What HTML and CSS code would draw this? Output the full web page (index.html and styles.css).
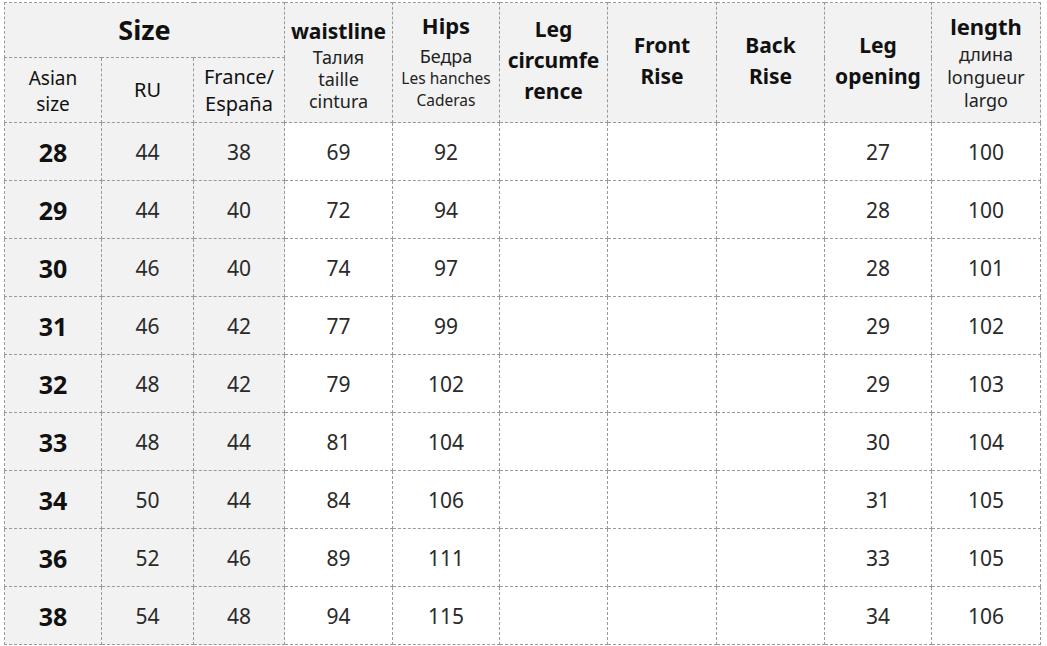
FILE: index.html
```html
<!DOCTYPE html>
<html>
<head>
<meta charset="utf-8">
<link rel="stylesheet" href="styles.css">
</head>
<body>
<table class="chart">
  <colgroup>
    <col class="c97"><col class="c92"><col class="c91"><col class="c108"><col class="c107"><col class="c108"><col class="c109"><col class="c108"><col class="c107"><col class="c109">
  </colgroup>
  <thead>
    <tr class="h1">
      <th colspan="3" class="size">Size</th>
      <th rowspan="2" class="multi waist"><div class="t">waistline</div><div class="s">Талия</div><div class="s">taille</div><div class="s">cintura</div></th>
      <th rowspan="2" class="multi hips"><div class="t">Hips</div><div class="s">Бедра</div><div class="s sm">Les hanches</div><div class="s sm">Caderas</div></th>
      <th rowspan="2" class="bold">Leg<br>circumfe<br>rence</th>
      <th rowspan="2" class="bold">Front<br>Rise</th>
      <th rowspan="2" class="bold">Back<br>Rise</th>
      <th rowspan="2" class="bold">Leg<br>opening</th>
      <th rowspan="2" class="multi len"><div class="t">length</div><div class="s">длина</div><div class="s">longueur</div><div class="s">largo</div></th>
    </tr>
    <tr class="h2">
      <th class="sub asian"><div>Asian</div><div>size</div></th>
      <th class="sub">RU</th>
      <th class="sub fr"><div>France/</div><div>España</div></th>
    </tr>
  </thead>
  <tbody>
    <tr><td class="g b">28</td><td class="g">44</td><td class="g">38</td><td>69</td><td>92</td><td></td><td></td><td></td><td>27</td><td>100</td></tr>
    <tr><td class="g b">29</td><td class="g">44</td><td class="g">40</td><td>72</td><td>94</td><td></td><td></td><td></td><td>28</td><td>100</td></tr>
    <tr><td class="g b">30</td><td class="g">46</td><td class="g">40</td><td>74</td><td>97</td><td></td><td></td><td></td><td>28</td><td>101</td></tr>
    <tr><td class="g b">31</td><td class="g">46</td><td class="g">42</td><td>77</td><td>99</td><td></td><td></td><td></td><td>29</td><td>102</td></tr>
    <tr><td class="g b">32</td><td class="g">48</td><td class="g">42</td><td>79</td><td>102</td><td></td><td></td><td></td><td>29</td><td>103</td></tr>
    <tr><td class="g b">33</td><td class="g">48</td><td class="g">44</td><td>81</td><td>104</td><td></td><td></td><td></td><td>30</td><td>104</td></tr>
    <tr><td class="g b">34</td><td class="g">50</td><td class="g">44</td><td>84</td><td>106</td><td></td><td></td><td></td><td>31</td><td>105</td></tr>
    <tr><td class="g b">36</td><td class="g">52</td><td class="g">46</td><td>89</td><td>111</td><td></td><td></td><td></td><td>33</td><td>105</td></tr>
    <tr><td class="g b">38</td><td class="g">54</td><td class="g">48</td><td>94</td><td>115</td><td></td><td></td><td></td><td>34</td><td>106</td></tr>
  </tbody>
</table>
</body>
</html>
```
FILE: styles.css
```css
html, body {
  margin: 0;
  padding: 0;
  background: #ffffff;
}
body {
  padding: 2px 0 0 4px;
  font-family: "Noto Sans", "Open Sans", sans-serif;
  color: #222;
}
.chart {
  border-collapse: collapse;
  table-layout: fixed;
  width: 1037px;
}
.c97 { width: 97px; }
.c92 { width: 92px; }
.c91 { width: 91px; }
.c108 { width: 108px; }
.c107 { width: 107px; }
.c109 { width: 109px; }
.chart th, .chart td {
  border: 1px dashed #9a9a9a;
  padding: 0;
  text-align: center;
  vertical-align: middle;
}
.chart th {
  background: #f2f2f2;
  color: #111;
}
.h1 { height: 55px; }
.h2 { height: 65px; }
.size {
  font-size: 27px;
  font-weight: 700;
  line-height: 30px;
  padding-bottom: 2px;
}
.sub {
  font-weight: 400;
  font-size: 20px;
  line-height: 22px;
  color: #222;
}
.chart th.asian {
  font-size: 19px;
  line-height: 26px;
  padding-top: 2px;
}
.fr { line-height: 27px; font-size: 20px; }
.bold {
  font-size: 21px;
  font-weight: 700;
  line-height: 31px;
}
.chart th.bold { padding-bottom: 4px; }
.chart th.multi { vertical-align: top; }
.multi .t {
  font-size: 21px;
  font-weight: 700;
  line-height: 26px;
}
.multi .s {
  font-size: 18px;
  font-weight: 400;
  line-height: 22px;
  color: #222;
}
.chart th.waist { padding-top: 15px; }
.waist .t { margin-bottom: 2px; }
.chart th.hips { padding-top: 9px; }
.hips .t { margin-bottom: 7px; font-size: 22px; }
.multi .sm { font-size: 15.5px; }
.chart th.len { padding-top: 10px; }
.len .t { margin-bottom: 4px; font-size: 22px; }
.len .s { line-height: 23px; }
.chart td {
  height: 57px;
  font-size: 21px;
  color: #2a2a2a;
}
.chart td.g { background: #f2f2f2; }
.chart td.b {
  font-weight: 700;
  font-size: 25px;
  color: #111;
}
```
